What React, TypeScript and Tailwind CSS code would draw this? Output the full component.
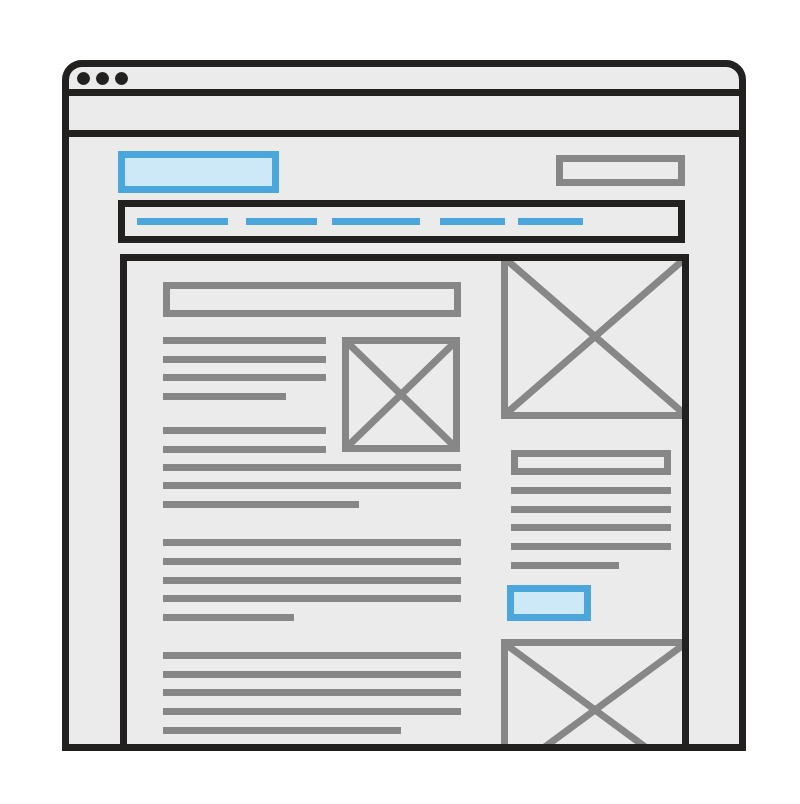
import React from 'react';

const DARK = 'border-[#222120]';

function Line({ w }: { w: number }) {
  return <div className="h-[7px] shrink-0 bg-[#878787]" style={{ width: w }} />;
}

function Para({ widths, className = '' }: { widths: number[]; className?: string }) {
  return (
    <div className={`flex flex-col shrink-0 gap-[11.7px] ${className}`}>
      {widths.map((w, i) => (
        <Line key={i} w={w} />
      ))}
    </div>
  );
}

// image placeholder: a box with a cross in it
function Cross({ w, h }: { w: number; h: number }) {
  return (
    <svg width={w} height={h} className="block">
      <line x1={0} y1={0} x2={w} y2={h} stroke="#878787" strokeWidth={7} />
      <line x1={w} y1={0} x2={0} y2={h} stroke="#878787" strokeWidth={7} />
    </svg>
  );
}

function TitleBar() {
  return (
    <>
      <div className={`h-[22px] shrink-0 flex items-center gap-[6px] pl-[8px] border-b-[7px] ${DARK} box-content`}>
        <div className="w-[13px] h-[13px] rounded-full bg-[#222120]" />
        <div className="w-[13px] h-[13px] rounded-full bg-[#222120]" />
        <div className="w-[13px] h-[13px] rounded-full bg-[#222120]" />
      </div>
      <div className={`h-[34px] shrink-0 border-b-[7px] ${DARK} box-content`} />
    </>
  );
}

function Header() {
  return (
    <>
      <div className="flex justify-between items-start shrink-0 w-[567px] mt-[14px]">
        <div className="w-[161px] h-[42px] border-[7px] border-[#4ba6dc] bg-[#cde9f7]" />
        <div className="w-[129px] h-[31px] mt-[4px] border-[7px] border-[#878787]" />
      </div>
      <div className={`w-[567px] h-[43px] shrink-0 mt-[7px] border-[7px] ${DARK} flex items-center pl-[12px]`}>
        <div className="h-[7px] w-[91px] bg-[#4ba6dc]" />
        <div className="h-[7px] w-[71px] ml-[18px] bg-[#4ba6dc]" />
        <div className="h-[7px] w-[88px] ml-[15px] bg-[#4ba6dc]" />
        <div className="h-[7px] w-[65px] ml-[20px] bg-[#4ba6dc]" />
        <div className="h-[7px] w-[65px] ml-[13px] bg-[#4ba6dc]" />
      </div>
    </>
  );
}

function MainColumn() {
  return (
    <div className="ml-[36px] w-[298px] shrink-0 pt-[21px] flex flex-col">
      <div className="h-[35px] shrink-0 border-[7px] border-[#878787]" />
      <div className="flex justify-between shrink-0 mt-[20px]">
        <div className="flex flex-col">
          <Para widths={[163, 163, 163, 123]} />
          <Para widths={[163, 163]} className="mt-[27px]" />
        </div>
        <div className="w-[118px] h-[115px] border-[7px] border-[#878787] mr-[1px]">
          <Cross w={104} h={101} />
        </div>
      </div>
      <Para widths={[298, 298, 196]} className="mt-[11px]" />
      <Para widths={[298, 298, 298, 298, 131]} className="mt-[31px]" />
      <Para widths={[298, 298, 298, 298, 238]} className="mt-[31px]" />
    </div>
  );
}

function Sidebar() {
  return (
    <div className="ml-[40px] w-[181px] shrink-0 flex flex-col">
      <div className="h-[158px] shrink-0 border-l-[7px] border-b-[7px] border-[#878787]">
        <Cross w={174} h={151} />
      </div>
      <div className="ml-[10px] mt-[31px] w-[160px] h-[25px] shrink-0 border-[7px] border-[#878787]" />
      <Para widths={[160, 160, 160, 160, 108]} className="ml-[10px] mt-[12px]" />
      <div className="ml-[6px] mt-[16px] w-[84px] h-[36px] shrink-0 border-[7px] border-[#4ba6dc] bg-[#cde9f7]" />
      <div className="mt-[18px] h-[142px] shrink-0 border-l-[7px] border-t-[7px] border-b-[7px] border-[#878787]">
        <Cross w={174} h={128} />
      </div>
    </div>
  );
}

export default function App() {
  return (
    <div className="w-full h-[804px] bg-white overflow-hidden">
      <div
        className={`ml-[62px] mt-[60px] w-[684px] h-[691px] border-[7px] ${DARK} rounded-t-[20px] bg-[#ebebeb] overflow-hidden flex flex-col`}
      >
        <TitleBar />
        <div className="flex-1 min-h-0 pl-[49px] flex flex-col overflow-hidden">
          <Header />
          <div className={`ml-[2px] mt-[11px] w-[569px] flex-1 min-h-0 border-t-[7px] border-x-[7px] ${DARK} flex overflow-hidden`}>
            <MainColumn />
            <Sidebar />
          </div>
        </div>
      </div>
    </div>
  );
}
